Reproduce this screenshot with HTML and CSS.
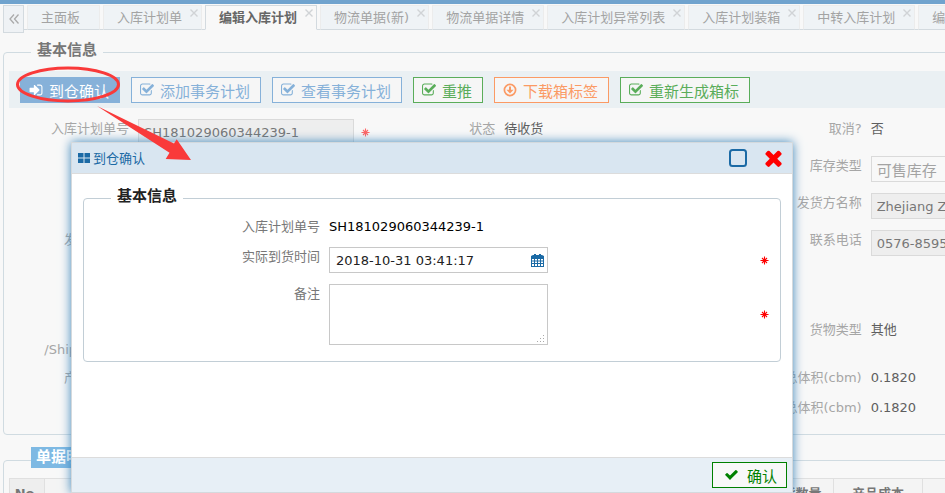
FILE: index.html
```
<!DOCTYPE html>
<html lang="zh-CN">
<head>
    <meta charset="UTF-8">
    <meta name="viewport" content="width=device-width, initial-scale=1.0">
    <title>编辑入库计划</title>
    <link rel="stylesheet" href="styles.css">
</head>
<body>

<!-- 图标 -->
<svg class="sprite" aria-hidden="true">
    <symbol id="i-check-square" viewBox="64 128 1664 1536"><path d="M1472 930v318q0 119-84.5 203.5t-203.5 84.5h-832q-119 0-203.5-84.5t-84.5-203.5v-832q0-119 84.5-203.5t203.5-84.5h832q63 0 117 25 15 7 18 23 3 17-9 29l-49 49q-10 10-23 10-3 0-9-2-23-6-45-6h-832q-66 0-113 47t-47 113v832q0 66 47 113t113 47h832q66 0 113-47t47-113v-254q0-13 9-22l64-64q10-10 23-10 6 0 12 3 20 8 20 29zm231-489l-814 814q-24 24-57 24t-57-24l-430-430q-24-24-24-57t24-57l110-110q24-24 57-24t57 24l263 263 647-647q24-24 57-24t57 24l110 110q24 24 24 57t-24 57z"/></symbol>
    <symbol id="i-sign-in" viewBox="64 128 1664 1536"><path d="M1312 896q0 26-19 45l-544 544q-19 19-45 19t-45-19-19-45v-288h-448q-26 0-45-19t-19-45v-384q0-26 19-45t45-19h448v-288q0-26 19-45t45-19 45 19l544 544q19 19 19 45zm352-352v704q0 119-84.5 203.5t-203.5 84.5h-320q-13 0-22.5-9.5t-9.5-22.5q0-4-1-20t-.5-26.5 3-23.5 10-19.5 20.5-6.5h320q66 0 113-47t47-113v-704q0-66-47-113t-113-47h-312l-11.5-1-11.5-3-8-5.5-7-9-2-13.5q0-4-1-20t-.5-26.5 3-23.5 10-19.5 20.5-6.5h320q119 0 203.5 84.5t84.5 203.5z"/></symbol>
    <symbol id="i-down" viewBox="0 0 14 14"><circle cx="7" cy="7" r="5.6" fill="none" stroke="currentColor" stroke-width="1.7"/><path d="M6 3.4h2v3.4h2.6L7 10.6 3.4 6.8H6z"/></symbol>
    <symbol id="i-check" viewBox="100 350 1600 1200"><path d="M1671 566q0 40-28 68l-724 724-136 136q-28 28-68 28t-68-28l-136-136-362-362q-28-28-28-68t28-68l136-136q28-28 68-28t68 28l294 295 656-657q28-28 68-28t68 28l136 136q28 28 28 68z"/></symbol>
    <symbol id="i-times" viewBox="290 320 1210 1240"><path d="M1490 1322q0 40-28 68l-136 136q-28 28-68 28t-68-28l-294-294-294 294q-28 28-68 28t-68-28l-136-136q-28-28-28-68t28-68l294-294-294-294q-28-28-28-68t28-68l136-136q28-28 68-28t68 28l294 294 294-294q28-28 68-28t68 28l136 136q28 28 28 68t-28 68l-294 294 294 294q28 28 28 68z"/></symbol>
    <symbol id="i-x" viewBox="0 0 8 8"><path d="M.5.5l7 7M7.500.5l-7 7" fill="none" stroke="currentColor" stroke-width="1.4"/></symbol>
    <symbol id="i-left" viewBox="0 0 10 10"><path d="M5 .5L1 5l4 4.500M9.500.5L5.500 5l4 4.500" fill="none" stroke="currentColor" stroke-width="1.3"/></symbol>
    <symbol id="i-star" viewBox="0 0 9 9"><path d="M4.500.5v8M.5 4.500h8M2 2l5 5M7 2L2 7" fill="none" stroke="currentColor" stroke-width="1.1"/><circle cx="4.500" cy="4.500" r="1.500"/></symbol>
    <symbol id="i-grid" viewBox="0 0 12 10"><path d="M0 0h5.500v4.500H0zM6.500 0H12v4.500H6.500zM0 5.500h5.500V10H0zM6.500 5.500H12V10H6.500z"/></symbol>
    <symbol id="i-square" viewBox="0 0 18 18"><rect x="1" y="1" width="16" height="16" rx="2.500" fill="none" stroke="currentColor" stroke-width="2"/></symbol>
    <symbol id="i-calendar" viewBox="0 0 13 13"><path fill-rule="evenodd" d="M2 1h1V0h2v1h3V0h2v1h1l2 1v11H0V2zM1 5v1.500h2V5zm3 0v1.500h2V5zm3 0v1.500h2V5zm3 0v1.500h2V5zM1 7.500V9h2V7.500zm3 0V9h2V7.500zm3 0V9h2V7.500zm3 0V9h2V7.500zM1 10v2h2v-2zm3 0v2h2v-2zm3 0v2h2v-2zm3 0v2h2v-2z"/></symbol>
</svg>

<div class="page">
    <nav class="tabs">
        <button type="button" class="tabs-toggle" aria-label="收起"><svg class="icon-left"><use href="#i-left"/></svg></button>
        <div class="tab"><a href="#">主面板</a></div>
        <div class="tab"><a href="#">入库计划单</a><button type="button" class="tab-close" aria-label="关闭"><svg><use href="#i-x"/></svg></button></div>
        <div class="tab active"><a href="#">编辑入库计划</a><button type="button" class="tab-close" aria-label="关闭"><svg><use href="#i-x"/></svg></button></div>
        <div class="tab"><a href="#">物流单据(新)</a><button type="button" class="tab-close" aria-label="关闭"><svg><use href="#i-x"/></svg></button></div>
        <div class="tab"><a href="#">物流单据详情</a><button type="button" class="tab-close" aria-label="关闭"><svg><use href="#i-x"/></svg></button></div>
        <div class="tab"><a href="#">入库计划异常列表</a><button type="button" class="tab-close" aria-label="关闭"><svg><use href="#i-x"/></svg></button></div>
        <div class="tab"><a href="#">入库计划装箱</a><button type="button" class="tab-close" aria-label="关闭"><svg><use href="#i-x"/></svg></button></div>
        <div class="tab"><a href="#">中转入库计划</a><button type="button" class="tab-close" aria-label="关闭"><svg><use href="#i-x"/></svg></button></div>
        <div class="tab"><a href="#">编辑中转计划</a><button type="button" class="tab-close" aria-label="关闭"><svg><use href="#i-x"/></svg></button></div>
    </nav>

    <fieldset class="panel">
        <legend>基本信息</legend>
        <div class="toolbar">
            <button type="button" class="btn btn-primary"><svg class="icon"><use href="#i-sign-in"/></svg>到仓确认</button>
            <button type="button" class="btn btn-blue"><svg class="icon"><use href="#i-check-square"/></svg>添加事务计划</button>
            <button type="button" class="btn btn-blue"><svg class="icon"><use href="#i-check-square"/></svg>查看事务计划</button>
            <button type="button" class="btn btn-green"><svg class="icon"><use href="#i-check-square"/></svg>重推</button>
            <button type="button" class="btn btn-orange"><svg class="icon"><use href="#i-down"/></svg>下载箱标签</button>
            <button type="button" class="btn btn-green"><svg class="icon"><use href="#i-check-square"/></svg>重新生成箱标</button>
        </div>

        <div class="form">
            <label for="plan-no">入库计划单号</label>
            <div class="field"><input type="text" id="plan-no" value="SH181029060344239-1" readonly><svg class="star"><use href="#i-star"/></svg></div>
            <span class="label">状态</span><span>待收货</span>
            <span class="label">取消?</span><span>否</span>

            <label class="col-3" for="stock-type">库存类型</label>
            <div class="field"><select id="stock-type"><option>可售库存</option></select></div>

            <label class="col-3" for="sender">发货方名称</label>
            <div class="field"><input type="text" id="sender" value="Zhejiang Zhongda" readonly></div>

            <span class="label">发货方地址</span><span></span>
            <label class="col-3" for="phone">联系电话</label>
            <div class="field"><input type="text" id="phone" value="0576-85951234" readonly></div>

            <span class="spacer"></span>

            <span class="label">运输方式<br>/Shipment ID</span><span></span>
            <span class="label col-3">货物类型</span><span>其他</span>

            <span class="label">产品总数量</span><span></span>
            <span class="label col-3">总体积(cbm)</span><span>0.1820</span>

            <span class="label col-3">总体积(cbm)</span><span>0.1820</span>
        </div>
    </fieldset>

    <fieldset class="panel detail">
        <legend class="legend-tag"><span>单据明细</span></legend>
        <table>
            <colgroup>
                <col class="col-no">
                <col span="5">
                <col class="col-qty">
                <col class="col-cost">
                <col class="col-rest">
            </colgroup>
            <tr>
                <th>No.</th>
                <th>箱号</th>
                <th>SKU</th>
                <th>产品名称</th>
                <th>规格</th>
                <th>重量</th>
                <th>发货数量</th>
                <th>产品成本</th>
                <th></th>
            </tr>
        </table>
    </fieldset>
</div>

<div class="modal" role="dialog" aria-labelledby="modal-title">
    <div class="modal-header">
        <svg class="icon-grid"><use href="#i-grid"/></svg>
        <span id="modal-title">到仓确认</span>
        <button type="button" class="modal-max" aria-label="最大化"><svg><use href="#i-square"/></svg></button>
        <button type="button" class="modal-close" aria-label="关闭"><svg><use href="#i-times"/></svg></button>
    </div>
    <div class="modal-body">
        <fieldset class="panel">
            <legend>基本信息</legend>
            <div class="modal-form">
                <span class="label">入库计划单号</span>
                <span class="plan-value">SH181029060344239-1</span>
                <span></span>

                <label for="arrive-time">实际到货时间</label>
                <div class="date-box">
                    <input type="text" id="arrive-time" value="2018-10-31 03:41:17">
                    <svg class="icon-calendar"><use href="#i-calendar"/></svg>
                </div>
                <svg class="star"><use href="#i-star"/></svg>

                <label for="remark">备注</label>
                <div class="remark-box">
                    <textarea id="remark"></textarea>
                    <svg class="grip" viewBox="0 0 8 8"><path d="M6 0h1v1H6zM3 3h1v1H3zM6 3h1v1H6zM0 6h1v1H0zM3 6h1v1H3zM6 6h1v1H6z"/></svg>
                </div>
                <svg class="star"><use href="#i-star"/></svg>
            </div>
        </fieldset>
    </div>
    <div class="modal-footer">
        <button type="button" class="btn btn-ok"><svg class="icon-check"><use href="#i-check"/></svg>确认</button>
    </div>
</div>

<!-- 操作指引 -->
<svg class="guide" viewBox="0 0 200 170" aria-hidden="true">
    <ellipse cx="68" cy="84.500" rx="50.500" ry="16.500" fill="none" stroke="#f93a3a" stroke-width="3"/>
    <path d="M97 106L174 143.500 176.700 139.300 191 160 165.700 159 169.500 152.700z" fill="#f93a3a"/>
</svg>

</body>
</html>
```
FILE: styles.css
```
* {
    box-sizing: border-box;
}
html, body {
    height: 100%;
}
body {
    margin: 0;
    overflow: hidden;
    background-color: #f8f8f8;
    border-top: 4px solid #70a3ce;
    color: #5f5f5f;
    font-family: "DejaVu Sans", "Noto Sans CJK SC", sans-serif;
    font-size: 13px;
    line-height: 19px;
}
button, input, select, textarea {
    font-family: inherit;
    font-size: 13px;
    color: inherit;
    margin: 0;
}
button {
    background: none;
    border: 0;
    padding: 0;
    cursor: pointer;
}
svg {
    display: block;
    fill: currentColor;
}
.sprite {
    position: absolute;
    width: 0;
    height: 0;
}
.page {
    min-width: 1108px;
    padding: 1px 3px 0;
}

/* tabs */
.tabs {
    display: flex;
    align-items: flex-start;
    gap: 3px;
    height: 27px;
    margin-bottom: 9px;
    background: linear-gradient(#d3dadf, #d3dadf) 0 24px / 100% 1px no-repeat;
}
.tabs-toggle {
    display: flex;
    align-items: center;
    justify-content: center;
    width: 21px;
    height: 28px;
    background-color: #eff2f5;
    border: 1px solid #d3dadf;
    color: #aaa;
}
.icon-left {
    width: 10px;
    height: 10px;
}
.tab {
    position: relative;
    flex: none;
    height: 25px;
    padding: 2px 19px 0 13px;
    background-color: #eff3f6;
    border: 1px solid #ececec;
    border-bottom-color: #d3dadf;
}
.tab a {
    color: #a3a3a3;
    text-decoration: none;
}
.tab.active {
    background-color: #f8f8f8;
    border-color: #d3dadf;
    border-bottom-color: #f8f8f8;
}
.tab.active a {
    color: #666;
    font-weight: bold;
}
.tab-close {
    position: absolute;
    top: 3px;
    right: 3px;
    color: #d0d3d6;
}
.tab-close svg {
    width: 8px;
    height: 8px;
}

/* panels */
.panel {
    margin: 0;
    padding: 7px 5px 17px;
    border: 1px solid #d0dbe1;
    border-radius: 4px;
}
.panel legend {
    margin-left: 22px;
    padding: 0 6px 4px;
    color: #777;
    font-size: 15px;
    font-weight: bold;
}
.toolbar {
    display: flex;
    gap: 11px;
    padding: 6px 11px 5px;
    margin-bottom: 11px;
    background-color: #eaf0f3;
}
.btn {
    display: flex;
    align-items: center;
    gap: 6px;
    height: 26px;
    padding: 0 10px 0 8px;
    border: 1px solid;
    background-color: #f6f6f6;
    font-size: 15px;
    white-space: nowrap;
}
.icon {
    width: 14px;
    height: 14px;
}
.btn-primary {
    background-color: #86b1d9;
    border-color: #86b1d9;
    color: #fff;
}
.btn-blue {
    color: #86b1d9;
}
.btn-green {
    color: #5aad5a;
}
.btn-orange {
    color: #fb9a64;
}

/* form */
.form {
    display: grid;
    grid-template-columns: repeat(3, 120px minmax(0, 1fr));
    grid-template-rows: repeat(4, 26px) 42px 37px 19px 19px;
    gap: 11px 9px;
    line-height: 20px;
}
.form label, .form .label {
    color: #a6a6a6;
    text-align: right;
}
.form .col-3 {
    grid-column: 5;
}
.spacer {
    grid-column: 1 / -1;
}
.field {
    display: flex;
    align-items: center;
    gap: 7px;
}
.field input, .field select {
    flex: none;
    width: 216px;
    height: 26px;
    padding: 0 5px;
    border: 1px solid #dadada;
    border-radius: 0;
    background-color: #eee;
    color: #777;
}
.field select {
    appearance: none;
    padding-top: 4px;
    background-color: #f8f8f8;
    color: #a3a3a3;
    font-size: 15px;
}
.star {
    flex: none;
    width: 9px;
    height: 9px;
    color: #f66;
}

/* detail table */
.detail {
    margin-top: 12px;
    padding-top: 5px;
}
.panel .legend-tag {
    padding: 0 0 5px;
}
.legend-tag span {
    display: block;
    padding: 1px 5px;
    background-color: #7eb9e3;
    color: #fff;
}
table {
    width: 100%;
    table-layout: fixed;
    border-collapse: collapse;
}
.col-no {
    width: 35px;
}
.col-qty {
    width: 76px;
}
.col-cost {
    width: 89px;
}
.col-rest {
    width: 176px;
}
th {
    height: 30px;
    padding: 0;
    border: 1px solid #e0e0e0;
    background-color: #f4f4f4;
    color: #777;
}
th:first-child {
    background-color: #eee;
}

/* modal */
.modal {
    position: absolute;
    top: 142px;
    left: 71px;
    right: 152px;
    border: 1px solid #d4d9dd;
    background-color: #fff;
    box-shadow: 0 0 10px #3d86bb;
    color: #000;
}
.modal-header {
    display: flex;
    align-items: center;
    height: 31px;
    padding: 0 10px 0 6px;
    border-bottom: 1px solid #dcdcdc;
    background-color: #d9e6f1;
    color: #1b6aa5;
}
.icon-grid {
    width: 12px;
    height: 10px;
    margin-right: 3px;
}
.modal-max {
    margin-left: auto;
}
.modal-max svg {
    width: 18px;
    height: 18px;
}
.modal-close {
    margin-left: 18px;
    color: #f00;
}
.modal-close svg {
    width: 17px;
    height: 17px;
}
.modal-body {
    min-height: 283px;
    padding: 13px 11px;
}
.modal-body .panel {
    padding: 7px 11px 16px;
    border-color: #c2ced6;
}
.modal-body legend {
    margin-left: 16px;
    color: #222;
}
.modal-form {
    display: grid;
    grid-template-columns: 225px 219px 1fr;
    gap: 11px 9px;
}
.modal-form label, .modal-form .label {
    color: #777;
    text-align: right;
}
.modal-form .star {
    align-self: center;
    justify-self: end;
    color: #f00;
}
.date-box, .remark-box {
    position: relative;
}
.date-box input {
    display: block;
    width: 100%;
    height: 26px;
    padding: 0 24px 0 6px;
    border: 1px solid #c8c8c8;
    color: #222;
}
.icon-calendar {
    position: absolute;
    top: 7px;
    right: 4px;
    width: 13px;
    height: 13px;
    color: #1b6aa5;
}
.remark-box textarea {
    display: block;
    width: 100%;
    height: 61px;
    border: 1px solid #c8c8c8;
    resize: none;
}
.grip {
    position: absolute;
    right: 3px;
    bottom: 2px;
    width: 8px;
    height: 8px;
    color: #aaa;
}
.modal-footer {
    display: flex;
    justify-content: flex-end;
    padding: 4px 5px;
    border-top: 1px solid #dcdcdc;
    background-color: #e7eff6;
}
.btn-ok {
    gap: 9px;
    padding: 0 9px 0 12px;
    background-color: #f8f8f8;
    color: #008000;
}
.icon-check {
    width: 13px;
    height: 10px;
}

.guide {
    position: absolute;
    top: 0;
    left: 0;
    width: 200px;
    height: 170px;
    pointer-events: none;
}
```
